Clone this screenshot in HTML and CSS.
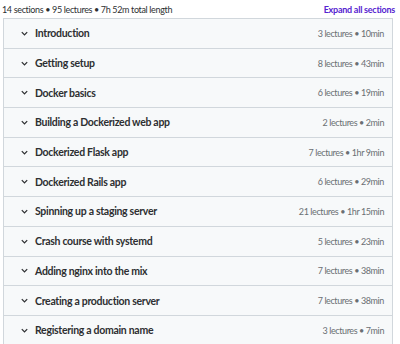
FILE: index.html
```html
<!DOCTYPE html>
<html lang="en">
<head>
    <meta charset="UTF-8">
    <meta name="viewport" content="width=device-width, initial-scale=1.0">
    <title>Course content</title>
    <link rel="stylesheet" href="styles.css">
</head>
<body>
    <div class="curriculum">
        <div class="curriculum-header">
            <span class="summary">14 sections • 95 lectures • 7h 52m total length</span>
            <button class="expand-all">Expand all sections</button>
        </div>
        <div class="sections">
            <div class="section">
                <svg class="chevron" viewBox="0 0 10 10"><path d="M2 3.5 L5 6.5 L8 3.5"/></svg>
                <span class="section-title">Introduction</span>
                <span class="section-meta">3 lectures • 10min</span>
            </div>
            <div class="section">
                <svg class="chevron" viewBox="0 0 10 10"><path d="M2 3.5 L5 6.5 L8 3.5"/></svg>
                <span class="section-title">Getting setup</span>
                <span class="section-meta">8 lectures • 43min</span>
            </div>
            <div class="section">
                <svg class="chevron" viewBox="0 0 10 10"><path d="M2 3.5 L5 6.5 L8 3.5"/></svg>
                <span class="section-title">Docker basics</span>
                <span class="section-meta">6 lectures • 19min</span>
            </div>
            <div class="section">
                <svg class="chevron" viewBox="0 0 10 10"><path d="M2 3.5 L5 6.5 L8 3.5"/></svg>
                <span class="section-title">Building a Dockerized web app</span>
                <span class="section-meta">2 lectures • 2min</span>
            </div>
            <div class="section">
                <svg class="chevron" viewBox="0 0 10 10"><path d="M2 3.5 L5 6.5 L8 3.5"/></svg>
                <span class="section-title">Dockerized Flask app</span>
                <span class="section-meta">7 lectures • 1hr 9min</span>
            </div>
            <div class="section">
                <svg class="chevron" viewBox="0 0 10 10"><path d="M2 3.5 L5 6.5 L8 3.5"/></svg>
                <span class="section-title">Dockerized Rails app</span>
                <span class="section-meta">6 lectures • 29min</span>
            </div>
            <div class="section">
                <svg class="chevron" viewBox="0 0 10 10"><path d="M2 3.5 L5 6.5 L8 3.5"/></svg>
                <span class="section-title">Spinning up a staging server</span>
                <span class="section-meta">21 lectures • 1hr 15min</span>
            </div>
            <div class="section">
                <svg class="chevron" viewBox="0 0 10 10"><path d="M2 3.5 L5 6.5 L8 3.5"/></svg>
                <span class="section-title">Crash course with systemd</span>
                <span class="section-meta">5 lectures • 23min</span>
            </div>
            <div class="section">
                <svg class="chevron" viewBox="0 0 10 10"><path d="M2 3.5 L5 6.5 L8 3.5"/></svg>
                <span class="section-title">Adding nginx into the mix</span>
                <span class="section-meta">7 lectures • 38min</span>
            </div>
            <div class="section">
                <svg class="chevron" viewBox="0 0 10 10"><path d="M2 3.5 L5 6.5 L8 3.5"/></svg>
                <span class="section-title">Creating a production server</span>
                <span class="section-meta">7 lectures • 38min</span>
            </div>
            <div class="section">
                <svg class="chevron" viewBox="0 0 10 10"><path d="M2 3.5 L5 6.5 L8 3.5"/></svg>
                <span class="section-title">Registering a domain name</span>
                <span class="section-meta">3 lectures • 7min</span>
            </div>
        </div>
    </div>
</body>
</html>
```

FILE: styles.css
```css
body {
    margin: 0;
    background: #fff;
    font-family: "Lato", "Noto Sans", sans-serif;
    color: #2d2f31;
}

.curriculum {
    padding: 0 7px 0 3px;
}

.curriculum-header {
    display: flex;
    justify-content: space-between;
    align-items: center;
    height: 18px;
    margin-left: -1px;
    margin-right: -2px;
}

.summary {
    font-size: 9px;
    letter-spacing: -0.35px;
}

.expand-all {
    background: none;
    border: none;
    padding: 0;
    font-family: inherit;
    font-size: 9px;
    font-weight: 700;
    letter-spacing: -0.25px;
    color: #5624d0;
    cursor: pointer;
}

.sections {
    border: 1px solid #d1d7dc;
    border-bottom: none;
}

.section {
    display: flex;
    align-items: center;
    height: 28.7px;
    padding: 0 8px 0 16px;
    background: #f7f9fa;
    border-bottom: 1px solid #d1d7dc;
}

.chevron {
    width: 9px;
    height: 9px;
    margin-right: 6px;
    fill: none;
    stroke: #2d2f31;
    stroke-width: 1.4;
}

.section-title {
    flex: 1;
    font-size: 10.5px;
    font-weight: 700;
    letter-spacing: -0.3px;
}

.section-meta {
    font-size: 9px;
    letter-spacing: -0.4px;
    color: #6a6f73;
}
```
